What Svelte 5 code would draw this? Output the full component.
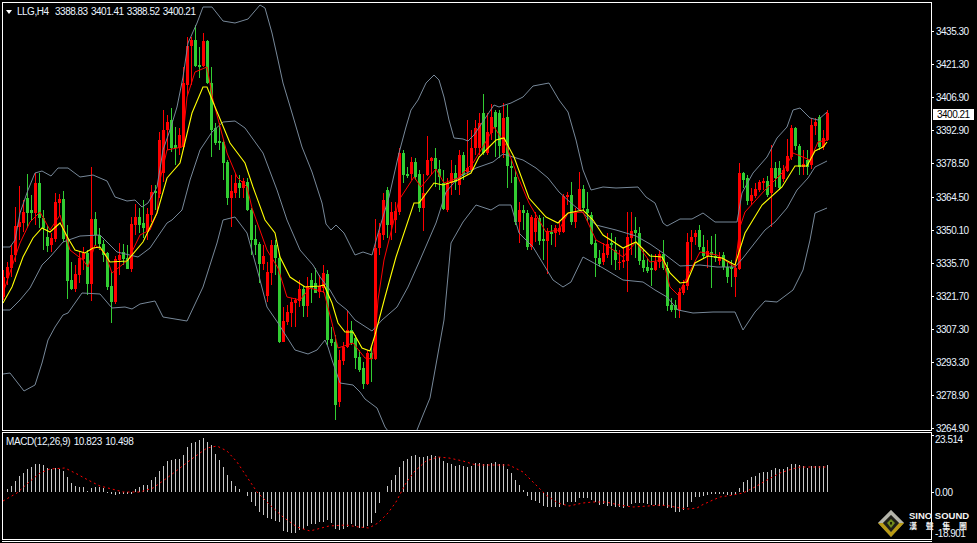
<script>
  // r = bull (red), g = bear (green): [colour, bodyTop, bodyBottom, wickHigh, wickLow]
  const candles = [
    ['r',277,297,270,300],['r',267,278,262,285],['r',255,268,245,277],['r',226,255,207,262],['r',222,227,186,240],
    ['r',212,223,200,232],['g',198,213,174,228],['g',210,213,195,220],['r',183,213,173,225],['g',183,218,173,228],
    ['g',218,228,210,250],['g',237,246,225,252],['r',238,245,233,252],['r',202,239,193,242],['r',199,203,194,215],
    ['g',199,239,191,242],['g',239,281,225,299],['g',280,289,262,290],['r',274,289,265,292],['r',258,275,252,283],
    ['r',253,259,247,270],['g',253,284,250,295],['r',219,284,167,301],['g',219,235,212,245],['g',235,244,228,250],
    ['g',244,255,240,262],['g',253,287,252,290],['g',286,302,272,323],['r',259,302,256,304],['r',255,260,243,275],
    ['g',252,259,244,265],['g',258,269,245,269],['r',224,269,217,272],['r',217,225,204,235],['g',217,225,208,233],
    ['g',223,228,200,238],['r',214,232,208,240],['r',192,215,185,222],['g',191,193,185,210],['r',140,194,132,198],
    ['r',130,173,110,182],['r',122,130,115,150],['g',120,148,108,152],['g',145,148,127,165],['r',135,148,128,155],
    ['r',83,147,67,150],['r',46,85,37,95],['r',40,46,37,85],['g',40,66,25,67],['g',65,67,47,78],
    ['r',41,66,33,67],['g',41,83,40,84],['g',83,130,67,157],['g',128,143,123,145],['g',141,143,123,150],
    ['g',142,163,140,180],['g',162,198,160,205],['r',191,198,175,227],['r',183,193,173,198],['g',183,188,175,198],
    ['r',181,188,178,198],['g',182,210,178,211],['g',210,240,208,255],['g',239,245,225,255],['g',244,264,242,283],
    ['r',256,264,245,270],['r',272,296,262,302],['r',245,273,240,285],['g',245,258,240,275],['g',258,342,255,343],
    ['r',321,342,307,342],['r',312,322,305,325],['r',302,313,298,327],['r',300,303,298,327],['r',289,301,280,307],
    ['g',289,306,286,317],['r',286,306,277,317],['g',280,288,273,303],['g',283,293,268,293],['r',286,292,275,298],
    ['r',273,288,265,293],['g',274,340,270,345],['g',339,343,327,346],['g',342,405,335,420],['r',360,402,350,407],
    ['r',347,361,342,365],['r',330,347,311,348],['g',330,343,321,345],['g',338,358,335,369],['g',357,370,350,372],
    ['g',368,384,362,389],['r',353,384,350,385],['g',353,359,347,382],['r',248,359,219,360],['r',233,248,223,255],
    ['r',200,235,193,240],['g',190,225,187,238],['r',212,225,202,240],['r',211,220,202,233],['r',153,212,148,215],
    ['g',153,175,150,183],['g',174,176,167,178],['r',162,174,157,180],['g',162,177,158,180],['g',174,208,170,212],
    ['r',193,208,174,231],['r',160,175,136,176],['r',158,161,157,175],['g',158,169,148,187],['g',169,177,160,190],
    ['g',183,209,170,210],['r',183,210,178,212],['r',173,183,160,195],['g',173,182,165,190],['r',155,185,150,195],
    ['g',155,175,152,180],['r',168,172,120,175],['r',148,170,130,172],['r',128,148,120,155],['r',123,148,113,155],
    ['g',113,153,94,155],['r',132,153,113,155],['r',117,133,104,140],['g',112,127,110,157],['g',113,146,110,158],
    ['r',118,153,103,158],['g',117,166,105,188],['g',166,168,160,183],['g',177,222,170,225],['r',210,222,202,243],
    ['g',210,213,205,230],['g',213,247,210,250],['r',217,247,215,250],['r',218,232,212,242],['g',218,241,215,245],
    ['g',239,241,217,260],['r',231,241,228,274],['g',232,234,225,245],['r',228,233,225,247],['r',228,232,220,235],
    ['r',196,232,194,233],['r',195,197,192,205],['g',195,222,182,225],['r',213,222,208,228],['r',189,210,172,211],
    ['g',189,208,185,210],['g',209,213,192,222],['g',215,244,212,245],['g',243,258,240,277],['g',258,264,250,267],
    ['r',253,262,243,265],['r',244,255,233,258],['g',243,245,233,265],['g',250,260,237,270],['r',262,263,250,270],
    ['r',260,262,248,268],['r',237,261,212,292],['r',231,238,212,255],['g',230,233,217,258],['g',233,261,227,265],
    ['g',260,268,250,272],['g',267,271,258,273],['g',268,270,254,286],['r',262,270,254,271],['r',254,262,250,268],
    ['g',254,268,240,270],['g',268,306,262,311],['g',305,310,298,312],['g',305,310,300,318],['r',292,310,288,318],
    ['r',285,293,280,295],['r',242,286,233,290],['r',237,242,230,260],['r',233,237,230,245],['g',230,247,225,250],
    ['g',247,256,235,258],['r',251,256,240,268],['g',252,255,236,288],['g',256,258,234,262],['r',257,261,252,265],
    ['g',255,267,252,270],['g',267,277,262,283],['g',267,269,260,287],['r',268,277,262,297],['r',173,269,163,270],
    ['g',173,180,172,188],['g',178,201,175,205],['r',195,201,188,205],['r',189,196,183,198],['r',182,190,180,192],
    ['r',181,183,178,190],['g',181,195,176,197],['r',168,193,145,227],['g',168,178,162,187],['g',168,188,161,190],
    ['r',170,179,165,182],['r',156,171,139,172],['r',128,157,125,160],['g',128,146,127,150],['g',146,167,144,175],
    ['r',164,167,150,175],['g',160,167,150,175],['r',125,165,118,169],['r',122,126,118,135],['g',117,147,115,150],
    ['r',138,147,130,150],['r',113,140,110,141]
  ];

  const bandUpper = '3,247 10,247 15,240 20,213 28,190 35,173 42,171 51,176 58,168 68,168 80,177 93,175 107,181 115,197 127,201 135,200 142,207 148,203 157,187 163,150 170,130 177,107 183,77 188,43 197,23 203,7 212,7 223,21 235,23 248,19 260,5 265,8 272,33 278,60 283,83 292,113 302,147 312,172 322,203 326,224 331,230 336,225 344,233 349,243 355,255 363,252 372,255 379,230 389,197 399,153 406,127 411,110 418,100 426,83 434,75 439,80 444,97 449,120 454,138 463,139 468,141 474,135 486,117 494,105 499,107 511,103 523,97 533,86 549,83 559,100 568,112 576,140 583,170 591,190 603,187 616,188 638,187 646,197 655,203 663,223 667,226 680,219 692,219 703,213 715,222 737,222 742,193 753,173 767,157 777,138 787,127 793,110 800,108 810,118 818,120 827,112';
  const bandMiddle = '3,310 10,310 20,300 30,288 42,265 50,257 63,242 80,236 100,235 117,252 138,257 150,248 167,223 172,220 182,210 190,180 200,150 212,132 223,122 235,121 245,128 263,153 277,190 287,220 300,250 313,265 320,277 330,290 337,302 347,310 355,320 372,331 382,320 397,307 408,287 420,260 436,223 446,192 458,178 476,168 493,162 503,154 523,160 536,168 548,178 559,192 571,203 583,213 596,225 616,230 636,236 650,244 663,253 680,266 700,265 717,267 735,267 743,258 757,240 765,230 775,222 787,208 797,190 808,178 815,167 827,161';
  const bandLower = '3,374 10,373 17,382 24,391 35,385 42,363 48,340 55,327 63,315 68,313 82,293 100,294 112,308 125,307 132,309 140,304 155,301 163,317 187,321 203,287 217,243 223,220 235,217 247,233 260,280 267,307 278,323 295,350 308,354 317,350 325,340 328,347 332,360 340,383 353,385 360,392 365,399 377,408 385,427 388,431 395,445 410,445 417,430 423,415 430,398 444,320 451,243 463,222 476,205 491,210 499,205 511,205 519,233 533,247 553,280 563,287 571,282 583,257 603,268 623,280 643,282 655,290 667,297 678,310 693,313 713,312 735,312 743,330 755,312 765,301 777,302 793,290 803,270 810,240 815,213 827,208';
  const maSlow = '3,303 12,287 23,257 33,238 42,228 50,232 60,223 68,238 75,250 85,253 93,248 100,247 110,262 127,261 143,242 157,213 167,178 180,163 192,113 203,87 207,87 213,102 230,143 245,163 253,187 265,220 275,233 280,257 290,277 305,287 320,286 324,285 332,303 338,323 345,332 353,332 362,348 370,351 375,335 385,297 396,257 414,203 419,203 434,183 443,185 458,180 471,173 479,157 496,140 504,138 514,157 529,198 546,217 558,223 568,213 583,210 593,220 603,235 623,248 636,242 650,256 662,257 670,273 680,283 687,282 695,263 708,256 722,258 735,265 745,233 762,205 782,187 795,166 807,166 815,151 823,147 827,142';
  const maFast = '3,293 20,243 30,222 40,212 50,230 60,215 70,250 83,260 88,267 95,245 105,253 112,273 128,260 140,235 150,230 157,213 160,180 167,150 182,147 187,97 195,72 207,67 213,100 227,153 237,177 247,187 252,208 267,250 278,268 287,297 300,300 310,288 324,292 332,323 338,348 347,345 353,343 365,358 372,359 375,340 378,300 384,260 399,200 414,177 421,187 436,169 444,183 458,178 473,163 484,145 494,127 506,145 518,177 529,203 546,232 559,230 568,213 583,212 596,240 609,247 623,257 636,242 650,262 663,260 670,287 678,295 687,277 700,252 717,255 735,267 740,227 745,212 765,190 783,172 793,153 810,160 818,142 827,140';

  // histogram height per bar, px above (+) or below (-) the zero line
  const macd = [0,3,6,11,16,19,23,25,28,28,27,24,23,24,23,21,15,9,6,5,5,1,4,5,5,4,-1,-2,-3,-2,-2,-2,-2,3,5,7,7,12,15,21,26,31,32,33,33,37,45,49,50,52,54,50,47,38,32,25,17,11,6,3,0,-4,-10,-14,-20,-23,-26,-27,-29,-30,-39,-40,-41,-41,-38,-37,-34,-32,-32,-30,-30,-28,-31,-37,-38,-37,-35,-32,-34,-36,-36,-34,-31,-21,-11,0,6,12,17,25,31,33,36,37,35,35,36,37,36,35,31,29,28,26,27,26,25,26,29,29,28,28,29,30,28,28,23,19,12,7,2,-4,-8,-9,-11,-14,-15,-15,-15,-15,-13,-10,-10,-10,-6,-6,-6,-8,-10,-13,-12,-14,-14,-15,-15,-16,-14,-12,-11,-11,-11,-12,-13,-13,-14,-14,-16,-16,-20,-20,-18,-15,-10,-5,-5,-4,-3,-2,-2,-2,-2,-3,-3,-3,4,10,12,15,16,19,20,20,22,24,23,23,25,28,28,27,26,24,26,26,26,26,27];
  const signal = '3,501 10,497 17,493 28,483 40,473 50,469 65,468 77,474 88,480 100,486 112,489 123,492 140,492 153,488 167,478 180,468 193,458 207,448 217,446 227,451 237,462 247,477 257,492 270,505 283,517 297,527 310,531 329,526 346,525 359,527 369,528 378,523 388,513 396,502 406,483 414,472 426,461 438,457 449,458 463,461 476,465 493,465 509,465 523,472 534,483 546,495 558,503 569,506 583,503 593,502 606,502 619,505 633,507 648,506 660,505 670,506 680,508 688,509 697,508 702,505 713,500 720,497 733,495 743,493 755,487 767,480 780,473 792,469 800,467 813,467 827,467';

  const zero = 492;
  const priceTicks = ['3435.30','3421.30','3406.90','3392.90','3378.50','3364.50','3350.10','3335.70','3321.70','3307.30','3293.30','3278.90','3264.90'];
  const xAt = (k) => 3 + 4 * k;
</script>

<div class="terminal">
  <section class="pane main-pane">
    <div class="plot">
      <svg class="chart" viewBox="3 3 928 427" width="928" height="427">
        {#each candles as [c, top, bottom, high, low], k}
          <rect class={c} x={xAt(k)} y={high} width="1" height={low - high} />
          <rect class={c} x={xAt(k) - 1} y={top} width="3" height={bottom - top} />
        {/each}
        <polyline class="band" points={bandUpper} />
        <polyline class="band" points={bandMiddle} />
        <polyline class="band" points={bandLower} />
        <polyline class="ma-fast" points={maFast} />
        <polyline class="ma-slow" points={maSlow} />
      </svg>
      <div class="legend symbol"><i class="arrow"></i>LLG,H4&nbsp; 3388.83 3401.41 3388.52 3400.21</div>
    </div>
    <div class="axis price-axis">
      {#each priceTicks as tick}
        <div class="tick">{tick}</div>
      {/each}
      <div class="last-price">3400.21</div>
    </div>
  </section>

  <section class="pane macd-pane">
    <div class="plot">
      <svg class="chart" viewBox="3 433 928 106" width="928" height="106">
        {#each macd as h, k}
          {#if h !== 0}
            <rect class="bar" x={xAt(k)} y={h > 0 ? zero - h : zero} width="1" height={Math.abs(h)} />
          {/if}
        {/each}
        <polyline class="signal" points={signal} />
      </svg>
      <div class="legend macd-name">MACD(12,26,9) 10.823 10.498</div>
    </div>
    <div class="axis macd-axis">
      <div class="tick">23.514</div>
      <div class="tick">0.00</div>
      <div class="tick">-18.901</div>
    </div>
  </section>

  <div class="footer"></div>

  <div class="logo">
    <svg viewBox="0 0 26 27" width="26" height="27">
      <polygon points="13,0 26,13 13,27 0,13" fill="#6f6f66" />
      <polygon points="13,0 26,13 21,13 13,5 5,13 0,13" fill="#b4b4aa" />
      <polygon points="0,13 13,27 26,13 21,13 13,22 5,13" fill="#b89a14" />
      <polygon points="13,5 21,13 13,22 5,13" fill="#1e1e16" />
      <polygon points="13,9 17,13 13,18 9,13" fill="#6f8a1c" />
      <rect x="12" y="12" width="2" height="2.5" fill="#1a1f08" />
    </svg>
    <div class="logo-text">
      <div class="logo-en">SINO SOUND</div>
      <div class="logo-cn"><span>漢</span><span>聲</span><span>集</span><span>團</span></div>
    </div>
  </div>
</div>

<style>
  :global(body) {
    margin: 0;
    background: #000;
  }

  .terminal {
    position: relative;
    width: 977px;
    height: 543px;
    padding-top: 2px;
    box-sizing: border-box;
    background: #000;
    overflow: hidden;
    color: #eaf4ff;
    font-family: "Liberation Sans", Arial, sans-serif;
    font-size: 10px;
    letter-spacing: -0.5px;
    word-spacing: 1px;
  }

  .pane {
    display: flex;
  }

  .main-pane {
    height: 429px;
    margin-bottom: 1px;
  }

  .macd-pane {
    height: 108px;
    margin-bottom: 1px;
  }

  .plot {
    position: relative;
    width: 928px;
    margin-left: 2px;
    border: 1px solid #fff;
    overflow: hidden;
  }

  .chart {
    display: block;
  }

  .r { fill: #f00; }
  .g { fill: #32cd32; }
  .bar { fill: #c8c8c8; }

  polyline {
    fill: none;
    stroke-width: 1;
  }

  .band { stroke: #778899; }
  .ma-fast { stroke: #f00; }
  .ma-slow { stroke: #ff0; stroke-width: 1.1; }
  .signal { stroke: #f00; stroke-dasharray: 2 3; }

  .legend {
    position: absolute;
    white-space: nowrap;
    line-height: 12px;
  }

  .symbol {
    top: 3px;
    left: 3px;
    display: flex;
    align-items: center;
  }

  .arrow {
    flex: none;
    width: 0;
    height: 0;
    margin-right: 5px;
    border: 3.5px solid transparent;
    border-top: 4px solid #fff;
    border-bottom: 0;
  }

  .macd-name {
    top: 3px;
    left: 3px;
    letter-spacing: -0.4px;
  }

  .axis {
    position: relative;
    flex: 1;
  }

  .price-axis {
    padding-top: 13px;
  }

  .tick {
    display: flex;
    align-items: center;
    height: 33.1px;
  }

  .tick::before {
    content: "";
    flex: none;
    width: 2px;
    height: 1px;
    margin-right: 2px;
    background: #fff;
  }

  .macd-axis {
    display: flex;
    flex-direction: column;
    padding-top: 1px;
  }

  .macd-axis .tick {
    height: 12px;
  }

  .macd-axis .tick::before {
    margin-right: 1px;
  }

  .macd-axis .tick:first-child::before {
    align-self: flex-start;
    margin-top: 2px;
  }

  .macd-axis .tick:nth-child(2) {
    margin-top: 41px;
  }

  .macd-axis .tick:nth-child(3) {
    margin-top: 29px;
    padding-left: 3px;
  }

  .macd-axis .tick:nth-child(3)::before {
    display: none;
  }

  .last-price {
    position: absolute;
    top: 107px;
    left: 1px;
    width: 41px;
    height: 11px;
    padding-left: 4px;
    box-sizing: border-box;
    background: #fff;
    color: #000;
    line-height: 11px;
  }

  .footer {
    height: 1px;
    width: 930px;
    margin-left: 2px;
    background: #fff;
  }

  .logo {
    position: absolute;
    left: 878px;
    top: 510px;
    display: flex;
    gap: 5px;
    align-items: flex-start;
  }

  .logo-text {
    width: 58px;
    padding-top: 1px;
    color: #f2f2f2;
    letter-spacing: 0;
    word-spacing: 0;
  }

  .logo-en {
    font-weight: 700;
    font-size: 9.5px;
    line-height: 10px;
    white-space: nowrap;
  }

  .logo-cn {
    display: flex;
    justify-content: space-between;
    font-family: "Noto Sans CJK TC", sans-serif;
    font-weight: 700;
    font-size: 8px;
    line-height: 9px;
  }
</style>
